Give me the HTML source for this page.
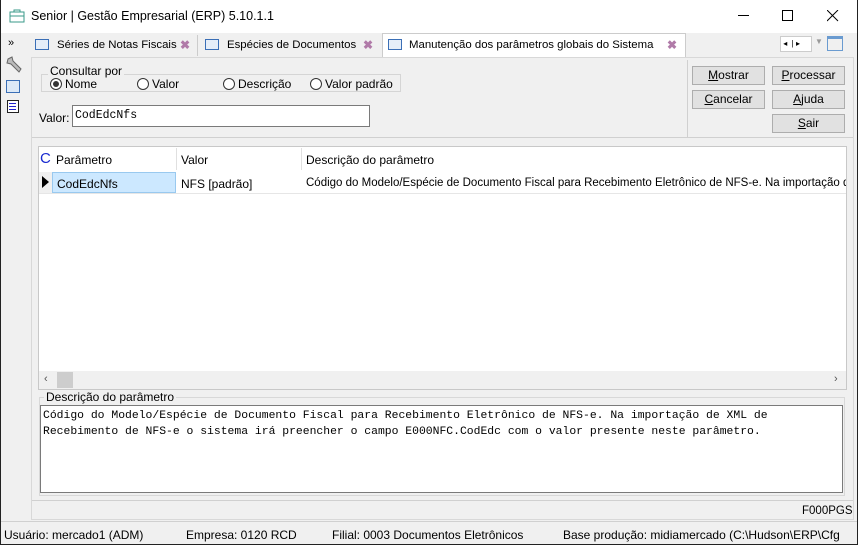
<!DOCTYPE html><html><head><meta charset="utf-8"><style>
*{box-sizing:border-box;margin:0;padding:0}
body{width:858px;height:545px;overflow:hidden;background:#f0f0f0;font-family:"Liberation Sans",sans-serif;font-size:12px;color:#000;position:relative}
.a{position:absolute}
.btn{position:absolute;background:#e1e1e1;border:1px solid #adadad;text-align:center;line-height:17px;font-size:12px}
.mono{font-family:"Liberation Mono",monospace;font-size:11.5px}
.rad{display:inline-block;width:12px;height:12px;border:1px solid #333;border-radius:50%;vertical-align:-2px;margin-right:3px;position:relative;background:#fff}
.t{font-size:11.4px}
.x{position:absolute;color:#b07aa8;font-size:12px;font-weight:bold}
</style></head><body>
<div class="a" style="left:0;top:0;width:858px;height:545px;border:1px solid #222;border-top:none"></div>
<div class="a" style="left:1px;top:0;width:856px;height:33px;background:#fff"></div>
<svg class="a" style="left:9px;top:9px" width="16" height="14"><rect x="1" y="3" width="14" height="10" fill="none" stroke="#3a9a8a"/><rect x="5" y="1" width="6" height="2" fill="none" stroke="#3a9a8a"/><line x1="1" y1="7" x2="15" y2="7" stroke="#3a9a8a"/></svg>
<div class="a" style="left:31px;top:9px;font-size:12.5px">Senior | Gestão Empresarial (ERP) 5.10.1.1</div>
<div class="a" style="left:738px;top:15px;width:11px;height:1px;background:#000"></div>
<div class="a" style="left:782px;top:10px;width:11px;height:11px;border:1px solid #000"></div>
<svg class="a" style="left:827px;top:10px" width="12" height="12"><path d="M0 0L11 11M11 0L0 11" stroke="#000" stroke-width="1"/></svg>
<!-- sidebar -->
<div class="a" style="left:8px;top:37px;font-size:11px">»</div>
<svg class="a" style="left:5px;top:56px" width="18" height="18"><path d="M3 3 L7 1 L8 5 L16 13 L14 16 L6 8 L2 7 Z" fill="#bbb" stroke="#666"/></svg>
<div class="a" style="left:6px;top:80px;width:14px;height:13px;border:1px solid #3b6fb6;background:#dce9f7"></div>
<div class="a" style="left:7px;top:100px;width:12px;height:13px;border:1px solid #222;background:#fff"></div>
<div class="a" style="left:9px;top:103px;width:7px;height:1px;background:#22c;box-shadow:0 3px 0 #22c,0 6px 0 #22c"></div>
<!-- tabs -->
<div class="a" style="left:30px;top:35px;width:168px;height:21px;border-right:1px solid #ccc"></div>
<div class="a" style="left:35px;top:39px;width:14px;height:11px;border:1px solid #3b6fb6;background:#e6eef8"></div>
<div class="a t" style="left:57px;top:39px">Séries de Notas Fiscais</div>
<div class="x" style="left:180px;top:38px">✖</div>
<div class="a" style="left:205px;top:39px;width:14px;height:11px;border:1px solid #3b6fb6;background:#e6eef8"></div>
<div class="a t" style="left:227px;top:39px">Espécies de Documentos</div>
<div class="x" style="left:363px;top:38px">✖</div>
<div class="a" style="left:382px;top:33px;width:304px;height:24px;background:#fff;border:1px solid #ccc;border-bottom:none"></div>
<div class="a" style="left:388px;top:39px;width:14px;height:11px;border:1px solid #3b6fb6;background:#e6eef8"></div>
<div class="a t" style="left:409px;top:39px">Manutenção dos parâmetros globais do Sistema</div>
<div class="x" style="left:667px;top:38px">✖</div>
<div class="a" style="left:780px;top:36px;width:32px;height:16px;background:#fff;border:1px solid #ccc;font-size:8px;line-height:14px">&nbsp;◂&nbsp;&nbsp;|&nbsp;▸</div>
<div class="a" style="left:815px;top:37px;font-size:8px;color:#999">▼</div>
<div class="a" style="left:827px;top:36px;width:16px;height:15px;border:1px solid #6a9bd0;border-top-width:3px"></div>
<!-- content -->
<div class="a" style="left:31px;top:57px;width:823px;height:463px;border:1px solid #d8d8d8;background:#f0f0f0"></div>
<div class="a" style="left:687px;top:60px;width:1px;height:77px;background:#d0d0d0"></div>
<div class="a" style="left:32px;top:137px;width:821px;height:1px;background:#d0d0d0"></div>
<div class="a" style="left:41px;top:74px;width:360px;height:18px;border:1px solid #d5d5d5"></div>
<div class="a" style="left:48px;top:64px;background:#f0f0f0;padding:0 2px">Consultar por</div>
<div class="a" style="left:50px;top:77px"><span class="rad"><span class="a" style="left:2px;top:2px;width:6px;height:6px;border-radius:50%;background:#333"></span></span>Nome</div>
<div class="a" style="left:137px;top:77px"><span class="rad"></span>Valor</div>
<div class="a" style="left:223px;top:77px"><span class="rad"></span>Descrição</div>
<div class="a" style="left:310px;top:77px"><span class="rad"></span>Valor padrão</div>
<div class="a" style="left:39px;top:111px">Valor:</div>
<div class="a mono" style="left:72px;top:105px;width:298px;height:22px;background:#fff;border:1px solid #7a7a7a;padding:3px 2px">CodEdcNfs</div>
<div class="btn" style="left:692px;top:66px;width:73px"><u>M</u>ostrar</div>
<div class="btn" style="left:772px;top:66px;width:73px"><u>P</u>rocessar</div>
<div class="btn" style="left:692px;top:90px;width:73px"><u>C</u>ancelar</div>
<div class="btn" style="left:772px;top:90px;width:73px"><u>A</u>juda</div>
<div class="btn" style="left:772px;top:114px;width:73px"><u>S</u>air</div>
<!-- grid -->
<div class="a" style="left:38px;top:146px;width:809px;height:244px;background:#fff;border:1px solid #c8c8c8"></div>
<div class="a" style="left:40px;top:150px;color:#1a2ad0;font-size:15px">C</div>
<div class="a" style="left:56px;top:153px">Parâmetro</div>
<div class="a" style="left:176px;top:148px;width:1px;height:22px;background:#e0e0e0"></div>
<div class="a" style="left:181px;top:153px">Valor</div>
<div class="a" style="left:301px;top:148px;width:1px;height:22px;background:#e0e0e0"></div>
<div class="a" style="left:306px;top:153px">Descrição do parâmetro</div>
<div class="a" style="left:39px;top:172px;width:13px;height:21px;background:#f0f0f0"></div>
<div class="a" style="left:42px;top:176px;width:0;height:0;border-left:7px solid #000;border-top:6px solid transparent;border-bottom:6px solid transparent"></div>
<div class="a" style="left:52px;top:172px;width:124px;height:21px;background:#cce8ff;border:1px solid #99c9ef"></div>
<div class="a" style="left:57px;top:177px">CodEdcNfs</div>
<div class="a" style="left:181px;top:177px">NFS [padrão]</div>
<div class="a" style="left:306px;top:177px;width:540px;white-space:nowrap;overflow:hidden;font-size:11.5px">Código do Modelo/Espécie de Documento Fiscal para Recebimento Eletrônico de NFS-e. Na importação de XML</div>
<div class="a" style="left:39px;top:193px;width:807px;height:1px;background:#e6e6e6"></div>
<div class="a" style="left:39px;top:371px;width:807px;height:18px;background:#f0f0f0"></div>
<div class="a" style="left:57px;top:372px;width:16px;height:16px;background:#cdcdcd"></div>
<div class="a" style="left:44px;top:373px;font-size:11px;color:#555">‹</div>
<div class="a" style="left:834px;top:373px;font-size:11px;color:#555">›</div>
<!-- desc -->
<div class="a" style="left:39px;top:397px;width:806px;height:99px;border:1px solid #d8d8d8"></div>
<div class="a" style="left:44px;top:390px;background:#f0f0f0;padding:0 2px">Descrição do parâmetro</div>
<div class="a mono" style="left:40px;top:405px;width:803px;height:88px;background:#fff;border:1px solid #7a7a7a;padding:2px 2px;line-height:16px;font-size:11.4px">Código do Modelo/Espécie de Documento Fiscal para Recebimento Eletrônico de NFS-e. Na importação de XML de<br>Recebimento de NFS-e o sistema irá preencher o campo E000NFC.CodEdc com o valor presente neste parâmetro.</div>
<div class="a" style="left:32px;top:500px;width:821px;height:1px;background:#d0d0d0"></div>
<div class="a" style="left:802px;top:505px;font-size:11.5px">F000PGS</div>
<!-- status -->
<div class="a" style="left:1px;top:521px;width:856px;height:1px;background:#d0d0d0"></div>
<div class="a" style="left:4px;top:528px">Usuário: mercado1 (ADM)</div>
<div class="a" style="left:186px;top:528px">Empresa: 0120 RCD</div>
<div class="a" style="left:332px;top:528px">Filial: 0003 Documentos Eletrônicos</div>
<div class="a" style="left:563px;top:528px;width:280px;white-space:nowrap;overflow:hidden">Base produção: midiamercado (C:\Hudson\ERP\Cfg</div>
</body></html>
